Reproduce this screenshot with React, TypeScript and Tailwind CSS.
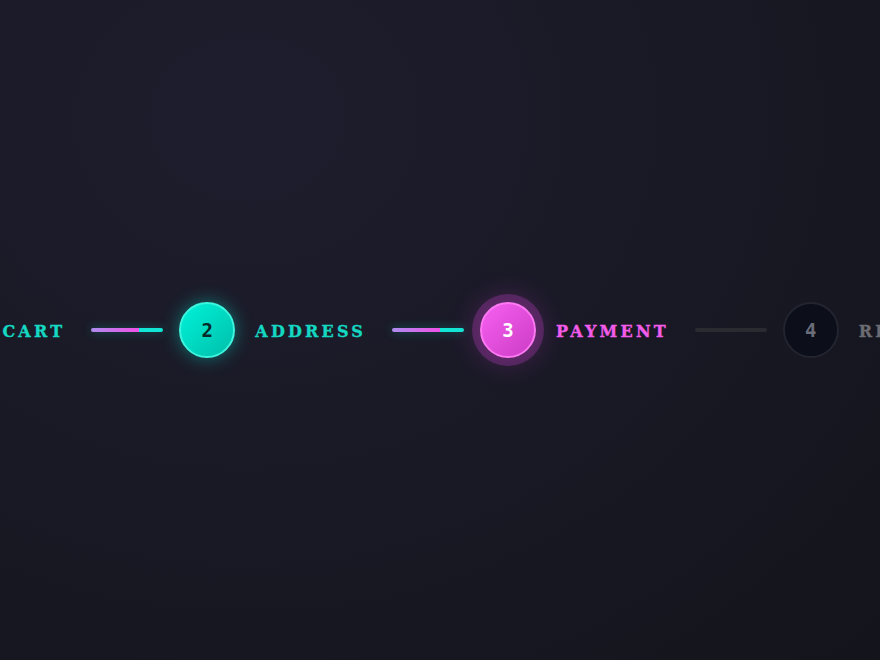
import React from 'react';

type Status = 'done' | 'active' | 'todo';

const steps: { n: number; label: string; status: Status }[] = [
  { n: 1, label: 'Cart', status: 'done' },
  { n: 2, label: 'Address', status: 'done' },
  { n: 3, label: 'Payment', status: 'active' },
  { n: 4, label: 'Review', status: 'todo' },
];

const bubbleBase =
  "w-14 h-14 shrink-0 rounded-full flex items-center justify-center border-2 text-[19px] font-bold font-['DejaVu_Sans_Mono',monospace]";

function Bubble({ n, status }: { n: number; status: Status }) {
  if (status === 'done') {
    return (
      <div className={`${bubbleBase} border-[#3df5df] bg-gradient-to-br from-[#00f2da] to-[#00bfa9] text-[#062a27] shadow-[0_0_18px_rgba(0,229,204,0.45)]`}>
        {n}
      </div>
    );
  }
  if (status === 'active') {
    return (
      <div className={`${bubbleBase} border-[#ff78f4] bg-gradient-to-br from-[#f760f2] to-[#cc3cc4] text-white shadow-[0_0_0_8px_rgba(225,70,230,0.24),0_0_26px_8px_rgba(225,70,230,0.18)]`}>
        {n}
      </div>
    );
  }
  return <div className={`${bubbleBase} border-[#22242f] bg-[#0c0e19] text-[#6a6d79]`}>{n}</div>;
}

function Connector({ filled }: { filled: boolean }) {
  return (
    <div
      className={
        filled
          ? 'w-[72px] h-1 shrink-0 ml-[26px] mr-4 rounded-full bg-[linear-gradient(90deg,#ad8cef_0%,#ef52e8_66%,#12e6d4_66%,#12e6d4_100%)] shadow-[0_0_10px_rgba(0,229,204,0.35)]'
          : 'w-[72px] h-1 shrink-0 ml-[26px] mr-4 rounded-full bg-[#2a2a31]'
      }
    />
  );
}

export default function App() {
  return (
    <div className="w-full h-screen overflow-hidden flex items-center justify-center bg-[radial-gradient(ellipse_at_28%_18%,#1e1d2d_0%,#1a1a27_40%,#14141c_100%)] font-['DejaVu_Serif',serif]">
      <div className="flex items-center shrink-0 whitespace-nowrap">
        {steps.map((s, i) => {
          const labelColor =
            s.status === 'done' ? 'text-[#14d8c2]' : s.status === 'active' ? 'text-[#f25ce9]' : 'text-[#6b6b72]';
          return (
            <React.Fragment key={s.n}>
              {i > 0 && <Connector filled={steps[i - 1].status === 'done' && s.status !== 'todo'} />}
              <div className="flex items-center gap-5 shrink-0">
                <Bubble n={s.n} status={s.status} />
                <span
                  className={`mt-[3px] text-[16px] font-bold uppercase tracking-[0.2em] [-webkit-text-stroke:0.35px_currentColor] ${labelColor}`}
                >
                  {s.label}
                </span>
              </div>
            </React.Fragment>
          );
        })}
      </div>
    </div>
  );
}
